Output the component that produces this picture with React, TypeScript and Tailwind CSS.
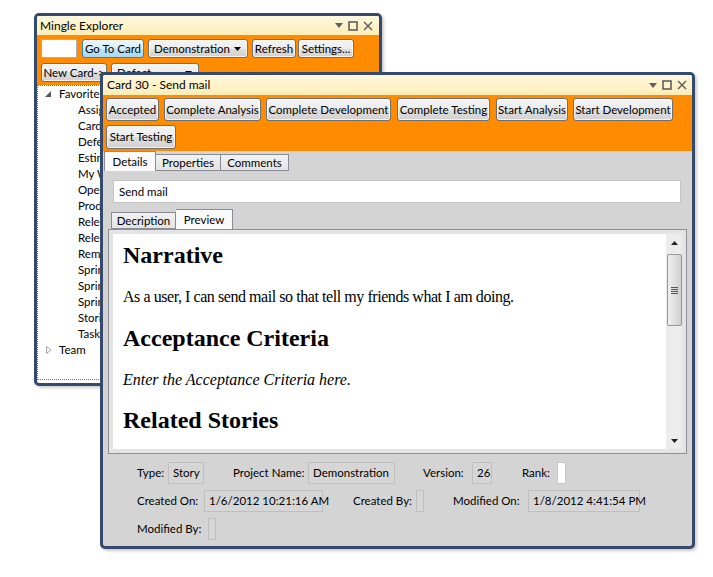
import React from "react"

const btnFace =
  "rounded-[3px] border border-[#707070] bg-[linear-gradient(#f4f4f4,#ececec_50%,#dedede_50%,#d2d2d2)] shadow-[inset_0_0_0_1px_rgba(255,255,255,0.7)]"

function Btn({ children, className = "" }: { children: React.ReactNode; className?: string }) {
  return (
    <div className={`flex items-center justify-center whitespace-nowrap ${btnFace} ${className}`}>
      {children}
    </div>
  )
}

function Combo({ label, className = "" }: { label: string; className?: string }) {
  return (
    <div className={`flex items-center justify-between whitespace-nowrap pl-[5px] pr-[6px] ${btnFace} ${className}`}>
      <span>{label}</span>
      <svg width="7" height="4" viewBox="0 0 7 4">
        <path d="M0 0h7L3.5 4z" fill="#000" />
      </svg>
    </div>
  )
}

function TitleButtons() {
  return (
    <div className="flex items-center gap-[5px] text-[#606060]">
      <svg width="8" height="5" viewBox="0 0 8 5">
        <path d="M0 0h8L4 5z" fill="currentColor" />
      </svg>
      <svg width="10" height="10" viewBox="0 0 10 10">
        <rect x="1" y="1" width="8" height="8" fill="none" stroke="currentColor" strokeWidth="1.6" />
      </svg>
      <svg width="10" height="10" viewBox="0 0 10 10">
        <path d="M1 1l8 8M9 1l-8 8" stroke="currentColor" strokeWidth="1.5" />
      </svg>
    </div>
  )
}

const titleBar = "bg-[linear-gradient(#fff8de,#fdedb6)] flex items-center justify-between"

// only the first letters show; the card window covers the rest
const favorites = [
  "Assigned",
  "Cards",
  "Defects",
  "Estimates",
  "My Work",
  "Open",
  "Product",
  "Release",
  "Release",
  "Remaining",
  "Sprint",
  "Sprint",
  "Sprint",
  "Stories",
  "Tasks",
]

function ExplorerWindow() {
  return (
    <div className="absolute left-[34px] top-[13px] flex h-[373px] w-[348px] flex-col overflow-hidden rounded-[5px] border-[3px] border-[#34496b] bg-white shadow-[2px_2px_3px_rgba(0,0,0,0.2)]">
      <div className={`${titleBar} h-[19px] pl-[3px] pr-[6px] text-[12px]`}>
        <span>Mingle Explorer</span>
        <TitleButtons />
      </div>
      <div className="flex h-[50px] flex-col gap-[5px] bg-[#ff8c00] pl-[4px] pt-[4px]">
        <div className="flex h-[19px] items-stretch">
          <div className="w-[36px] border border-[#abadb3] bg-white" />
          <div className="ml-[5px] flex w-[62px] items-center justify-center rounded-[3px] border border-[#3c7fb1] bg-[linear-gradient(#eaf6fd,#d9f0fc_50%,#bee6fd_50%,#a7d9f5)]">
            Go To Card
          </div>
          <Combo label="Demonstration" className="ml-[4px] w-[100px]" />
          <Btn className="ml-[4px] w-[44px]">Refresh</Btn>
          <Btn className="ml-[2px] w-[56px]">Settings...</Btn>
        </div>
        <div className="flex h-[19px] items-stretch">
          <Btn className="w-[66px]">New Card-&gt;</Btn>
          <Combo label="Defect" className="ml-[4px] w-[88px]" />
        </div>
      </div>
      <div className="mb-[3px] flex-1 border border-dotted border-[#777]">
        <div className="w-[62px] overflow-hidden">
          <div className="flex h-[16px] items-center pl-[7px] leading-[16px]">
            <svg className="shrink-0" width="6" height="6" viewBox="0 0 6 6">
              <path d="M6 0v6H0z" fill="#595959" />
            </svg>
            <span className="ml-[8px] whitespace-nowrap">Favorites</span>
          </div>
          {favorites.map((f, i) => (
            <div key={i} className="h-[16px] whitespace-nowrap pl-[40px] leading-[16px]">
              {f}
            </div>
          ))}
          <div className="flex h-[16px] items-center pl-[8px] leading-[16px]">
            <svg className="shrink-0" width="6" height="8" viewBox="0 0 6 8">
              <path d="M0.5 0.5L5 4L0.5 7.5z" fill="none" stroke="#a6a6a6" />
            </svg>
            <span className="ml-[7px]">Team</span>
          </div>
        </div>
      </div>
    </div>
  )
}

function Tab({ label, active = false, className = "" }: { label: string; active?: boolean; className?: string }) {
  return (
    <div
      className={`flex items-center justify-center border border-[#898c95] ${
        active ? "h-[20px] border-b-0 bg-[#fafafa]" : "h-[17px] bg-[linear-gradient(#f2f2f2,#e3e3e3)]"
      } ${className}`}
    >
      {label}
    </div>
  )
}

function Field({ label, value, labelW, boxW, ml = 0, white = false }: { label: string; value?: string; labelW: number; boxW: number; ml?: number; white?: boolean }) {
  return (
    <div className="flex items-center" style={{ marginLeft: ml }}>
      <span className="whitespace-nowrap" style={{ width: labelW }}>
        {label}
      </span>
      <div
        className={`ml-[5px] flex h-[22px] items-center whitespace-nowrap border pl-[4px] ${
          white ? "border-[#c8c8c8] bg-white" : "border-[#bfbfbf] bg-[#d6d6d6]"
        }`}
        style={{ width: boxW }}
      >
        {value}
      </div>
    </div>
  )
}

function Scrollbar() {
  return (
    <div className="flex w-[16px] flex-col items-center bg-[#ececec]">
      <div className="flex h-[18px] items-center">
        <svg width="7" height="4" viewBox="0 0 7 4">
          <path d="M0 4h7L3.5 0z" fill="#222" />
        </svg>
      </div>
      <div className="mt-[2px] flex h-[72px] w-[15px] items-center justify-center rounded-[2px] border border-[#979797] bg-[linear-gradient(90deg,#f0f0f0,#dcdcdc_60%,#cfcfcf)]">
        <div className="flex flex-col gap-[1px]">
          <div className="h-[1px] w-[7px] bg-[#555]" />
          <div className="h-[1px] w-[7px] bg-[#555]" />
          <div className="h-[1px] w-[7px] bg-[#555]" />
          <div className="h-[1px] w-[7px] bg-[#555]" />
        </div>
      </div>
      <div className="flex-1" />
      <div className="flex h-[16px] items-center">
        <svg width="7" height="4" viewBox="0 0 7 4">
          <path d="M0 0h7L3.5 4z" fill="#222" />
        </svg>
      </div>
    </div>
  )
}

function CardWindow() {
  return (
    <div className="absolute left-[100px] top-[72px] flex h-[477px] w-[595px] flex-col overflow-hidden rounded-[5px] border-[3px] border-[#34496b] bg-[#d4d4d4] shadow-[2px_2px_3px_rgba(0,0,0,0.2)]">
      <div className={`${titleBar} h-[20px] pl-[4px] pr-[5px] text-[12px]`}>
        <span>Card 30 - Send mail</span>
        <TitleButtons />
      </div>
      <div className="flex h-[56px] flex-col gap-[4px] bg-[#ff8c00] pl-[3px] pt-[3px]">
        <div className="flex h-[23px] items-stretch gap-[5px]">
          <Btn className="w-[53px]">Accepted</Btn>
          <Btn className="w-[97px]">Complete Analysis</Btn>
          <Btn className="w-[125px]">Complete Development</Btn>
          <Btn className="ml-[1px] w-[93px]">Complete Testing</Btn>
          <Btn className="ml-[1px] w-[72px]">Start Analysis</Btn>
          <Btn className="w-[100px]">Start Development</Btn>
        </div>
        <div className="flex h-[24px] items-stretch">
          <Btn className="w-[70px]">Start Testing</Btn>
        </div>
      </div>
      <div className="flex flex-1 flex-col">
        <div className="flex items-end pl-[1px]">
          <Tab label="Details" active className="w-[52px]" />
          <Tab label="Properties" className="w-[65px] border-l-0" />
          <Tab label="Comments" className="w-[68px] border-l-0" />
        </div>
        <div className="ml-[10px] mr-[11px] mt-[9px] flex h-[23px] items-center border border-[#c4c4c4] bg-white pl-[5px]">
          Send mail
        </div>
        <div className="ml-[8px] mt-[6px] flex items-end">
          <Tab label="Decription" className="w-[65px]" />
          <Tab label="Preview" active className="h-[19px] w-[57px] border-l-0" />
        </div>
        <div className="ml-[5px] flex h-[225px] w-[579px] border border-[#8e8f94] bg-[#e4e4e4] p-[4px]">
          <div className="flex flex-1 bg-white">
            <div className="flex-1 overflow-hidden pl-[10px] pt-[7px] font-['Liberation_Serif',serif] text-black">
              <h2 className="whitespace-nowrap text-[24px] font-bold leading-[28px]">Narrative</h2>
              <p className="mt-[19px] whitespace-nowrap text-[16px] leading-[18px] tracking-[-0.44px]">
                As a user, I can send mail so that tell my friends what I am doing.
              </p>
              <h2 className="mt-[18px] whitespace-nowrap text-[24px] font-bold leading-[28px]">Acceptance Criteria</h2>
              <p className="mt-[19px] whitespace-nowrap text-[16px] italic leading-[18px]">
                Enter the Acceptance Criteria here.
              </p>
              <h2 className="mt-[17px] whitespace-nowrap text-[24px] font-bold leading-[28px]">Related Stories</h2>
            </div>
            <Scrollbar />
          </div>
        </div>
        <div className="mt-[8px] flex flex-col gap-[6px] pl-[34px]">
          <div className="flex h-[22px] items-center">
            <Field label="Type:" value="Story" labelW={26} boxW={36} />
            <Field label="Project Name:" value="Demonstration" labelW={70} boxW={87} ml={29} />
            <Field label="Version:" value="26" labelW={44} boxW={20} ml={28} />
            <Field label="Rank:" labelW={30} boxW={9} ml={30} white />
          </div>
          <div className="flex h-[22px] items-center">
            <Field label="Created On:" value="1/6/2012 10:21:16 AM" labelW={62} boxW={119} />
            <Field label="Created By:" labelW={58} boxW={8} ml={30} />
            <Field label="Modified On:" value="1/8/2012 4:41:54 PM" labelW={70} boxW={112} ml={29} />
          </div>
          <div className="flex h-[22px] items-center">
            <Field label="Modified By:" labelW={66} boxW={8} />
          </div>
        </div>
      </div>
    </div>
  )
}

export default function App() {
  return (
    <div className="relative h-[577px] w-[713px] overflow-hidden bg-white font-['Lato',sans-serif] text-[11.5px] leading-[16px] text-black">
      <ExplorerWindow />
      <CardWindow />
    </div>
  )
}
